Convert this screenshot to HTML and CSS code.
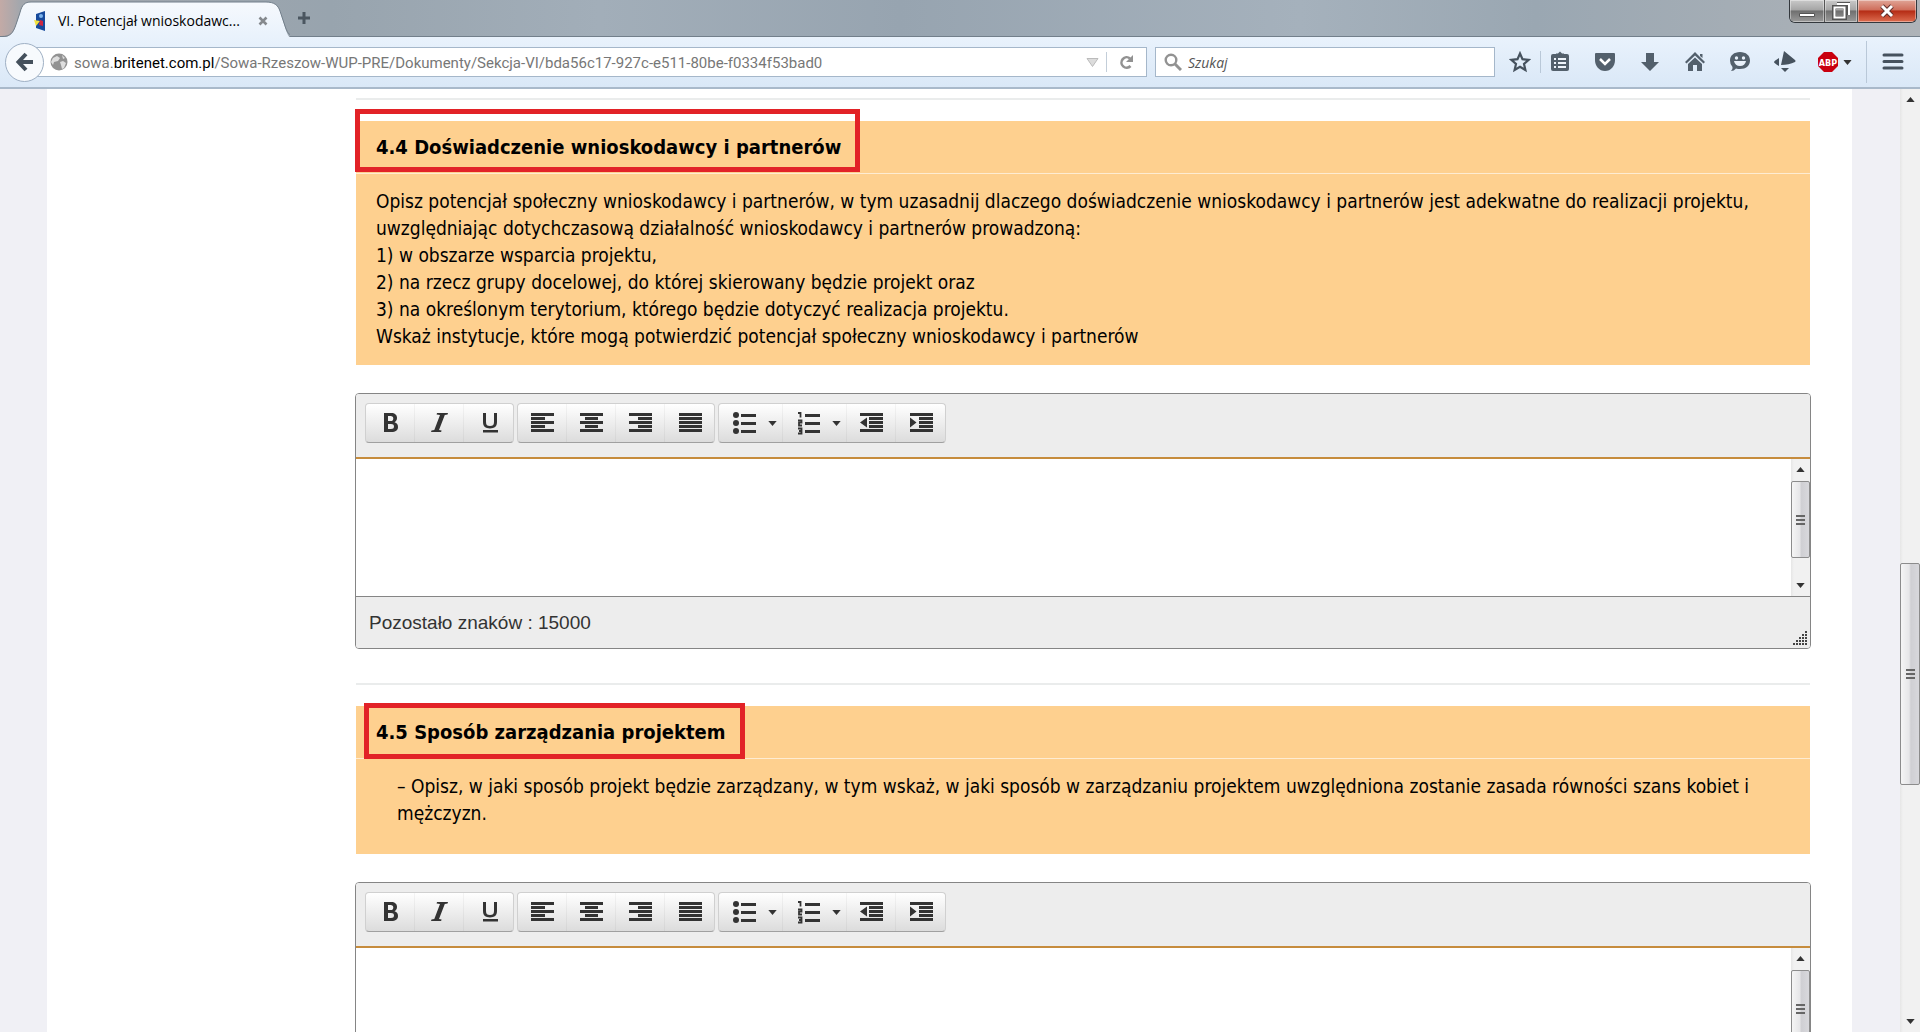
FILE: index.html
```html
<!DOCTYPE html>
<html lang="pl">
<head>
<meta charset="utf-8">
<title>VI. Potencjał wnioskodawcy</title>
<link rel="stylesheet" href="styles.css">
</head>
<body>
<svg class="defs" aria-hidden="true">
  <symbol id="i-left" viewBox="0 0 24 20"><path d="M0 0h23v3H0zM0 4h14v3H0zM0 8h23v3H0zM0 12h14v3H0zM0 16h23v3H0z"/></symbol>
  <symbol id="i-center" viewBox="0 0 24 20"><path d="M0 0h23v3H0zM5 4h13v3H5zM0 8h23v3H0zM5 12h13v3H5zM0 16h23v3H0z"/></symbol>
  <symbol id="i-right" viewBox="0 0 24 20"><path d="M0 0h23v3H0zM9 4h14v3H9zM0 8h23v3H0zM9 12h14v3H9zM0 16h23v3H0z"/></symbol>
  <symbol id="i-full" viewBox="0 0 24 20"><path d="M0 0h23v3H0zM0 4h23v3H0zM0 8h23v3H0zM0 12h23v3H0zM0 16h23v3H0z"/></symbol>
  <symbol id="i-bold" viewBox="0 0 24 20"><path fill-rule="evenodd" d="M5 0h7c4 0 6 2 6 5 0 2-1 3.500-2.500 4.200C18 10 19 11.500 19 14c0 3.500-2.500 5-6.500 5H5zM9 3v5h2.500c2 0 2.800-1 2.800-2.600C14.300 4 13.500 3 11.500 3zM9 11v5h3c2 0 3-.800 3-2.500S14 11 12 11z"/></symbol>
  <symbol id="i-italic" viewBox="0 0 24 20"><path d="M9 0h11l-.400 1.500-2.800.500-5.800 15 2.600.500-.500 1.500H3l.500-1.500 2.800-.500L12 2l-3.400-.500z"/></symbol>
  <symbol id="i-under" viewBox="0 0 24 20"><path d="M5 0h3v9c0 3 1.300 4 4 4s4-1 4-4V0h3v9c0 4.500-2.500 6.400-7 6.400S5 13.500 5 9zM5 17h15v2.500H5z"/></symbol>
  <symbol id="i-ul" viewBox="0 0 24 24"><circle cx="4" cy="4" r="3"/><circle cx="4" cy="12" r="3"/><circle cx="4" cy="20" r="3"/><path d="M9 3h15v3H9zM9 11h15v3H9zM9 19h15v3H9z"/></symbol>
  <symbol id="i-ol" viewBox="0 0 24 24"><path d="M9 3h15v3H9zM9 11h15v3H9zM9 19h15v3H9z"/><path d="M2 2h2.500v4.500M2 9.500h3.500v2.200H3v2.800h3M2 17.500h3.500v5H2M3 20h2.500" fill="none" stroke="#333" stroke-width="1.800"/></symbol>
  <symbol id="i-out" viewBox="0 0 24 20"><path d="M0 0h23v3H0zM9 4h14v3H9zM9 8h14v3H9zM9 12h14v3H9zM0 16h23v3H0zM7 4.500v10L0 9.500z"/></symbol>
  <symbol id="i-in" viewBox="0 0 24 20"><path d="M0 0h23v3H0zM9 4h14v3H9zM9 8h14v3H9zM9 12h14v3H9zM0 16h23v3H0zM0 4.500v10l6.500-5z"/></symbol>
  <symbol id="i-drop" viewBox="0 0 10 6"><path d="M0 0h10L5 6z"/></symbol>
  <symbol id="i-up" viewBox="0 0 10 6"><path d="M0 6h10L5 0z"/></symbol>
</svg>

<header class="browser">
  <div class="titlebar">
    <div class="tab">
      <svg class="tab-shape" viewBox="0 0 290 37" aria-hidden="true">
        <defs><linearGradient id="tabfill" x2="0" y2="1"><stop offset="0" stop-color="#f6f9fd"/><stop offset="1" stop-color="#e9f2fc"/></linearGradient></defs>
        <path d="M0 37h2c8 0 11-3 14-12l4-12c2-8 5-11 11-11h235c8 0 12 3 14 9l5 16c2 7 4 10 5 10z" fill="url(#tabfill)"/>
        <path d="M0 36.500h2c8 0 11-3 14-12l4-12c2-8 5-10.500 11-10.500h235c8 0 12 3 14 9l5 15c2 6 4 8.500 5 8.500" fill="none" stroke="#727f8b"/>
      </svg>
      <svg class="favicon" viewBox="0 0 12 20" aria-hidden="true"><path d="M2 3l9-3v20L2 17z" fill="#174a9c"/><path d="M0 9l6 1-4 5z" fill="#f3e13c"/><path d="M6 9l3 1v5l-4-1z" fill="#cf2640"/><circle cx="7" cy="5" r="2" fill="#7db4ec"/></svg>
      <span class="tab-title">VI. Potencjał wnioskodawc...</span>
      <button class="plain tab-close" aria-label="Zamknij kartę"><svg width="10" height="10" viewBox="0 0 10 10"><path d="M1.500 1.500l7 7M8.500 1.500l-7 7" stroke="#85898d" stroke-width="2.600"/></svg></button>
    </div>
    <button class="plain new-tab" aria-label="Nowa karta"><svg width="14" height="14" viewBox="0 0 14 14"><path d="M7 1v12M1 7h12" stroke="#4b5660" stroke-width="3"/></svg></button>
    <div class="window-buttons">
      <button class="win min" aria-label="Minimalizuj"><svg width="18" height="16" viewBox="0 0 18 16"><path d="M1.500 10.500h15v3h-15z" fill="#fff" stroke="#555"/></svg></button>
      <button class="win max" aria-label="Przywróć"><svg width="18" height="18" viewBox="0 0 18 18"><path d="M5 1.500h12V13M2 5h11v11H2z" fill="none" stroke="#555" stroke-width="4"/><path d="M5 2h12v11M2.500 5.500h10v10h-10z" fill="none" stroke="#fff" stroke-width="2"/></svg></button>
      <button class="win close" aria-label="Zamknij"><svg width="16" height="14" viewBox="0 0 16 14"><path d="M3 2l10 10M13 2L3 12" stroke="#61302c" stroke-width="5"/><path d="M3 2l10 10M13 2L3 12" stroke="#fff" stroke-width="3"/></svg></button>
    </div>
  </div>

  <div class="navbar">
    <button class="back" aria-label="Wstecz"><svg width="20" height="20" viewBox="0 0 20 20"><path d="M11 2L3.500 10l7.500 8M4 10h14" fill="none" stroke="#44505c" stroke-width="4"/></svg></button>
    <div class="address">
      <svg width="18" height="18" viewBox="0 0 18 18" aria-hidden="true"><circle cx="9" cy="9" r="8.500" fill="#929292"/><path d="M3 5l4-2 3 2-2 3-4 1-1 3-2-3zM10 9l3-1 3 2-2 5-2 1-1-4zM12 2l3 3-2 1z" fill="#dedede"/></svg>
      <a class="url" href="#">sowa.<b>britenet.com.pl</b>/Sowa-Rzeszow-WUP-PRE/Dokumenty/Sekcja-VI/bda56c17-927c-e511-80be-f0334f53bad0</a>
      <button class="plain" aria-label="Historia"><svg width="13" height="9" viewBox="0 0 13 9"><path d="M1 .500h11L6.500 8.500z" fill="#dcdcdc" stroke="#bbb"/></svg></button>
      <span class="divider"></span>
      <button class="plain reload" aria-label="Odśwież"><svg width="15" height="15" viewBox="0 0 15 15"><path d="M11.500 11A5.200 5.200 0 1 1 11 3.500" fill="none" stroke="#929292" stroke-width="2.600"/><path d="M14 0v7H7z" fill="#929292"/></svg></button>
    </div>
    <label class="search">
      <svg width="18" height="18" viewBox="0 0 18 18" aria-hidden="true"><circle cx="7" cy="7" r="5.300" fill="none" stroke="#929292" stroke-width="2.400"/><path d="M11 11l6 6" stroke="#929292" stroke-width="3"/></svg>
      <input type="search" placeholder="Szukaj" aria-label="Szukaj">
    </label>
    <div class="tools">
      <button class="plain star" aria-label="Dodaj zakładkę"><svg viewBox="0 0 22 22"><path d="M11 2.500l2.500 5.700 6.200.600-4.700 4.100 1.400 6.100L11 15.800 5.600 19 7 12.900 2.300 8.800l6.200-.600z" fill="none" stroke="#46525e" stroke-width="2.200"/></svg></button>
      <button class="plain" aria-label="Zakładki"><svg viewBox="0 0 22 22"><path d="M7 4V2.500h2L11 .500l2 2h2V4"/><rect x="2" y="3" width="18" height="17" rx="2"/><path d="M5 8h2M9 8h8M5 12h2M9 12h8M5 16h2M9 16h8" stroke="#eef4fb" stroke-width="2"/></svg></button>
      <button class="plain" aria-label="Pocket"><svg viewBox="0 0 22 22"><path d="M2 2h18q1 0 1 1v6c0 6-4 11-10 11S1 15 1 9V3q0-1 1-1z"/><path d="M6 8l5 5 5-5" fill="none" stroke="#fff" stroke-width="2.500"/></svg></button>
      <button class="plain" aria-label="Pobieranie"><svg viewBox="0 0 22 22"><path d="M7 2h8v9h5L11 20 2 11h5z"/></svg></button>
      <button class="plain" aria-label="Strona startowa"><svg viewBox="0 0 22 22"><path d="M11 1l10 10-1.500 1.500L11 4.500l-8.500 8L1 11zM11 6.500l7 6.500v7h-5v-6H9v6H4v-7zM16 3h2.500v4L16 5z"/></svg></button>
      <button class="plain" aria-label="Czat"><svg viewBox="0 0 22 22"><path d="M11 1c6 0 10 3.500 10 8.500S17 18 11 18q-2 0-4-.500Q5 20 2 20q2-2 1.500-4Q1 13.500 1 9.500C1 4.500 5 1 11 1z"/><circle cx="7.500" cy="7" r="1.700" fill="#e9f1fa"/><circle cx="14.500" cy="7" r="1.700" fill="#e9f1fa"/><path d="M5 10h12q-1 5-6 5t-6-5z" fill="#e9f1fa"/></svg></button>
      <button class="plain" aria-label="Udostępnij"><svg viewBox="0 0 22 22"><path d="M10 0l11 9q1 1 0 2-6 3-14 3zM5 7v8q-5-3-5-4t5-4zM7 17h8l-4 4z" fill="#46525e"/></svg></button>
      <button class="plain abp" aria-label="Adblock Plus"><svg viewBox="0 0 22 22"><path d="M7 1h8l6 6v8l-6 6H7l-6-6V7z" fill="#c9000f"/><text x="11" y="15" text-anchor="middle" class="abp-text">ABP</text></svg><svg class="small" viewBox="0 0 10 6"><use href="#i-drop"/></svg></button>
      <button class="plain menu" aria-label="Menu"><svg viewBox="0 0 22 22"><path d="M2 4h18M2 10.500h18M2 17h18" stroke="#46525e" stroke-width="3" stroke-linecap="round"/></svg></button>
    </div>
  </div>
</header>

<div class="viewport">
  <main class="page">
    <div class="paper">
      <section class="block">
        <div class="note">
          <h2>4.4 Doświadczenie wnioskodawcy i partnerów</h2>
          <p>Opisz potencjał społeczny wnioskodawcy i partnerów, w tym uzasadnij dlaczego doświadczenie wnioskodawcy i partnerów jest adekwatne do realizacji projektu,<br>uwzględniając dotychczasową działalność wnioskodawcy i partnerów prowadzoną:<br>1) w obszarze wsparcia projektu,<br>2) na rzecz grupy docelowej, do której skierowany będzie projekt oraz<br>3) na określonym terytorium, którego będzie dotyczyć realizacja projektu.<br>Wskaż instytucje, które mogą potwierdzić potencjał społeczny wnioskodawcy i partnerów</p>
          <span class="frame frame-wide"></span>
        </div>
        <div class="editor">
          <div class="toolbar">
            <div class="group">
              <button aria-label="Pogrubienie"><svg><use href="#i-bold"/></svg></button><button aria-label="Kursywa"><svg><use href="#i-italic"/></svg></button><button aria-label="Podkreślenie"><svg><use href="#i-under"/></svg></button>
            </div>
            <div class="group">
              <button aria-label="Do lewej"><svg><use href="#i-left"/></svg></button><button aria-label="Do środka"><svg><use href="#i-center"/></svg></button><button aria-label="Do prawej"><svg><use href="#i-right"/></svg></button><button aria-label="Wyjustuj"><svg><use href="#i-full"/></svg></button>
            </div>
            <div class="group">
              <button class="split" aria-label="Lista punktowana"><svg class="list"><use href="#i-ul"/></svg><svg class="small"><use href="#i-drop"/></svg></button><button class="split" aria-label="Lista numerowana"><svg class="list"><use href="#i-ol"/></svg><svg class="small"><use href="#i-drop"/></svg></button><button aria-label="Zmniejsz wcięcie"><svg><use href="#i-out"/></svg></button><button aria-label="Zwiększ wcięcie"><svg><use href="#i-in"/></svg></button>
            </div>
          </div>
          <div class="edit-area">
            <textarea aria-label="Doświadczenie wnioskodawcy i partnerów"></textarea>
            <div class="scroll inner"><svg class="small"><use href="#i-up"/></svg><div class="thumb"></div><svg class="small"><use href="#i-drop"/></svg></div>
          </div>
          <div class="status"><span>Pozostało znaków : 15000</span>
            <svg class="grip" viewBox="0 0 14 14" aria-hidden="true"><path d="M12 1h2M9 4h2M12 4h2M6 7h2M9 7h2M12 7h2M3 10h2M6 10h2M9 10h2M12 10h2M0 13h2M3 13h2M6 13h2M9 13h2M12 13h2" stroke="#444" stroke-width="2"/></svg>
          </div>
        </div>
      </section>
      <section class="block">
        <div class="note compact">
          <h2>4.5 Sposób zarządzania projektem</h2>
          <p>– Opisz, w jaki sposób projekt będzie zarządzany, w tym wskaż, w jaki sposób w zarządzaniu projektem uwzględniona zostanie zasada równości szans kobiet i<br>mężczyzn.</p>
          <span class="frame frame-narrow"></span>
        </div>
        <div class="editor">
          <div class="toolbar">
            <div class="group">
              <button aria-label="Pogrubienie"><svg><use href="#i-bold"/></svg></button><button aria-label="Kursywa"><svg><use href="#i-italic"/></svg></button><button aria-label="Podkreślenie"><svg><use href="#i-under"/></svg></button>
            </div>
            <div class="group">
              <button aria-label="Do lewej"><svg><use href="#i-left"/></svg></button><button aria-label="Do środka"><svg><use href="#i-center"/></svg></button><button aria-label="Do prawej"><svg><use href="#i-right"/></svg></button><button aria-label="Wyjustuj"><svg><use href="#i-full"/></svg></button>
            </div>
            <div class="group">
              <button class="split" aria-label="Lista punktowana"><svg class="list"><use href="#i-ul"/></svg><svg class="small"><use href="#i-drop"/></svg></button><button class="split" aria-label="Lista numerowana"><svg class="list"><use href="#i-ol"/></svg><svg class="small"><use href="#i-drop"/></svg></button><button aria-label="Zmniejsz wcięcie"><svg><use href="#i-out"/></svg></button><button aria-label="Zwiększ wcięcie"><svg><use href="#i-in"/></svg></button>
            </div>
          </div>
          <div class="edit-area">
            <textarea aria-label="Sposób zarządzania projektem"></textarea>
            <div class="scroll inner"><svg class="small"><use href="#i-up"/></svg><div class="thumb"></div><svg class="small"><use href="#i-drop"/></svg></div>
          </div>
        </div>
      </section>
    </div>
  </main>
  <div class="scroll outer"><svg class="small"><use href="#i-up"/></svg><div class="thumb"></div><svg class="small"><use href="#i-drop"/></svg></div>
</div>
</body>
</html>
```
FILE: styles.css
```css
* { box-sizing: border-box; }
body {
  margin: 0;
  height: 100vh;
  display: flex;
  flex-direction: column;
  overflow: hidden;
  font-family: "DejaVu Sans Condensed", "Noto Sans", sans-serif;
  color: #000;
}
.defs { display: none; }
button { font: inherit; padding: 0; }
.plain {
  border: 0;
  background: none;
  display: flex;
  align-items: center;
  justify-content: center;
}
.small { width: 9px; height: 5px; fill: #333; flex: none; }

/* Browser frame */
.browser { flex: none; font-family: Roboto, "Open Sans", sans-serif; }
.titlebar {
  display: flex;
  height: 37px;
  background: linear-gradient(90deg, #c3aaa6 0, #a3a7ad 20px, #98a4ae 330px, #a2aeb9 600px, #97a4b0 900px, #a5b1bc 1300px, #9aa7b2 80%, #aeb3b8);
  border-bottom: 1px solid #727f8b;
}
.tab {
  position: relative;
  width: 290px;
  height: 37px;
  padding: 4px 22px 0 34px;
  display: flex;
  align-items: center;
}
.tab-shape { position: absolute; inset: 0; width: 290px; height: 37px; }
.favicon { position: relative; width: 12px; height: 20px; }
.tab-title { position: relative; flex: 1; padding-left: 12px; font-family: "Open Sans", sans-serif; font-size: 14px; white-space: nowrap; }
.tab-close { position: relative; }
.new-tab { width: 28px; }
.window-buttons {
  display: flex;
  margin: 0 3px 0 auto;
  height: 23px;
  border: 1px solid #33383d;
  border-top: 0;
  border-radius: 0 0 6px 6px;
  overflow: hidden;
}
.win {
  border: 0;
  border-right: 1px solid #555;
  box-shadow: inset 0 0 0 1px #ffffff66;
  display: flex;
  align-items: center;
  justify-content: center;
  background: linear-gradient(#c9c9c9, #a5a5a5 45%, #6f6f6f 50%, #9a9a9a);
}
.min { width: 35px; }
.max { width: 33px; }
.close { width: 58px; border-right: 0; background: linear-gradient(#e0a597, #cf6e5b 45%, #b52c15 50%, #dd6d50); }

.navbar {
  display: flex;
  align-items: center;
  height: 52px;
  padding-left: 5px;
  background: linear-gradient(#e9f2fc, #dae8f7);
  border-bottom: 2px solid #a9b9ca;
}
.back {
  position: relative;
  z-index: 1;
  width: 39px;
  height: 39px;
  border: 1px solid #9fb0c4;
  border-radius: 50%;
  background: #f7fafd;
  display: flex;
  align-items: center;
  justify-content: center;
}
.address {
  flex: 1;
  margin-left: -8px;
  height: 30px;
  padding: 0 8px 0 13px;
  display: flex;
  align-items: center;
  background: #fff;
  border: 1px solid #a5b7ca;
}
.url { flex: 1; margin-left: 6px; font-size: 15px; line-height: 20px; padding-top: 2px; color: #777; text-decoration: none; white-space: nowrap; overflow: hidden; }
.url b { font-weight: 400; color: #000; }
.divider { width: 1px; height: 20px; margin-left: 7px; background: #c3ced9; }
.reload { margin: 0 4px 0 12px; }
.search {
  width: 340px;
  height: 30px;
  margin: 0 14px 0 8px;
  padding: 0 8px;
  display: flex;
  align-items: center;
  gap: 6px;
  background: #fff;
  border: 1px solid #a5b7ca;
}
.search input { flex: 1; min-width: 0; border: 0; padding: 0; background: none; font: italic 14px "Open Sans", sans-serif; outline: 0; }
.search input::placeholder { color: #555; opacity: 1; }
.tools { display: flex; align-items: center; gap: 23px; height: 100%; }
.tools svg:not(.small) { width: 22px; height: 22px; fill: #53606c; }
.star { margin-right: -15px; padding-right: 9px; border-right: 1px solid #b9c8d8; }
.abp { gap: 4px; margin-left: -2px; }
.abp-text { font: bold 10px "DejaVu Sans Condensed", sans-serif; font-size: 9px; fill: #fff; }
.menu { height: 42px; margin-left: -9px; padding: 0 16px 0 15px; border-left: 1px solid #b9c8d8; }

/* Page */
.viewport { flex: 1; min-height: 0; display: flex; }
.page { flex: 1; min-width: 0; padding: 0 48px 0 47px; overflow: hidden; background: #f0f0f5; }
.paper { min-height: 100%; padding: 9px 42px 0 309px; background: #fff; }
.block { border-top: 2px solid #eaecec; padding-top: 21px; margin-bottom: 34px; }
.note { position: relative; margin-bottom: 28px; background: #fed08f; white-space: nowrap; }
.note h2 {
  margin: 0;
  padding: 0 20px;
  font-size: 20px;
  line-height: 52px;
  border-bottom: 1px solid #feecd2;
}
.note p { margin: 0; padding: 14px 20px 15px; font-size: 19px; line-height: 27px; }
.compact p { padding: 14px 41px 27px; }
.frame { position: absolute; border: 5px solid #e22227; }
.frame-wide { left: -1px; top: -12px; width: 505px; height: 63px; }
.frame-narrow { left: 8px; top: -3px; width: 381px; height: 56px; }

/* Rich text editor */
.editor { border: 1px solid #858585; border-radius: 4px; overflow: hidden; margin: 0 -1px; }
.toolbar { display: flex; gap: 3px; padding: 9px 9px 14px; background: #ededed; border-bottom: 2px solid #c68c3d; }
.group {
  display: flex;
  height: 40px;
  border: 1px solid #d0d0d0;
  border-bottom-color: #a0a0a0;
  border-radius: 4px;
  background: linear-gradient(#fff, #dcdcdc);
}
.group button {
  width: 49px;
  padding-left: 2px;
  border: 0;
  border-right: 1px solid #0000000a;
  background: none;
  display: flex;
  align-items: center;
  justify-content: center;
}
.group button:last-child { border-right: 0; }
.group svg:not(.small) { width: 24px; height: 20px; fill: #333; }
.group svg.list:not(.small) { height: 24px; }
.group .split { width: 64px; gap: 12px; padding-left: 13px; justify-content: flex-start; }
.edit-area { display: flex; height: 137px; background: #fff; }
textarea { flex: 1; border: 0; resize: none; outline: 0; font: 16px "Liberation Sans", sans-serif; }
.status {
  display: flex;
  align-items: center;
  justify-content: space-between;
  height: 52px;
  padding: 0 3px 0 13px;
  border-top: 1px solid #858585;
  background: #ededed;
  color: #333;
  font: 19px "Liberation Sans", Arial, sans-serif;
}
.grip { width: 14px; height: 14px; align-self: flex-end; margin-bottom: 3px; }

/* Scroll bars */
.scroll { display: flex; flex-direction: column; align-items: center; padding: 8px 0; background: linear-gradient(90deg, #e6e6e6, #f1f1f1 3px, #f1f1f1); }
.scroll .small:last-child { margin-top: auto; }
.thumb {
  width: 100%;
  display: flex;
  align-items: center;
  justify-content: center;
  border: 1px solid #8c8c8c;
  border-radius: 2px;
  background: linear-gradient(90deg, #f5f5f5, #e6e6e8 45%, #cfcfd3 55%, #d8d8dc);
}
.thumb::before { content: ""; width: 9px; height: 10px; background: repeating-linear-gradient(#666 0 2px, transparent 2px 4px); }
.inner { width: 19px; }
.inner .thumb { height: 77px; margin-top: 9px; }
.outer { flex: none; width: 20px; }
.outer .thumb { flex: 0 0 24%; margin-top: 461px; }
```
